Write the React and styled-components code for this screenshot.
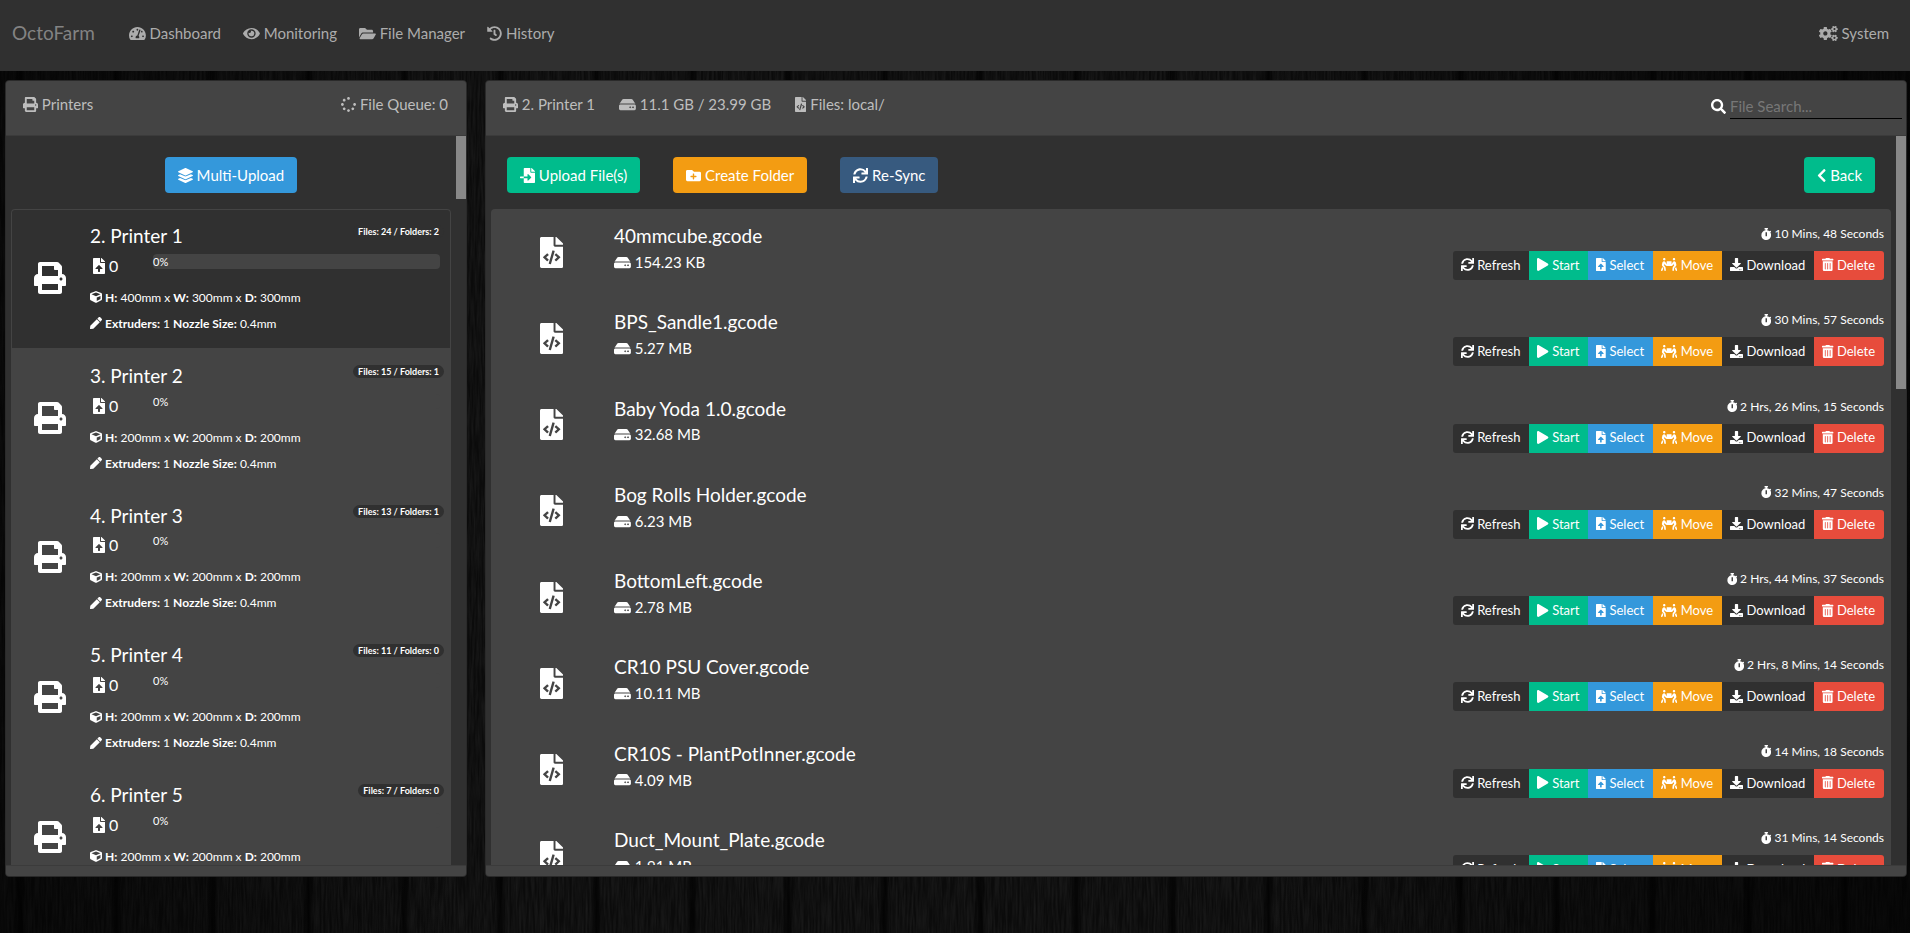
import React from "react";
import styled, { createGlobalStyle } from "styled-components";
import {
  FaTachometerAlt,
  FaEye,
  FaFolderOpen,
  FaHistory,
  FaCogs,
  FaPrint,
  FaSpinner,
  FaLayerGroup,
  FaFileUpload,
  FaCube,
  FaPen,
  FaHdd,
  FaFileCode,
  FaSearch,
  FaFileImport,
  FaFolderPlus,
  FaSync,
  FaChevronLeft,
  FaStopwatch,
  FaPlay,
  FaPeopleCarry,
  FaDownload,
  FaTrashAlt,
} from "react-icons/fa";

const color = {
  dark: "#303030",
  panel: "#444444",
  green: "#00bc8c",
  blue: "#3498db",
  orange: "#f39c12",
  navy: "#375a7f",
  red: "#e74c3c",
};

const grain = `url("data:image/svg+xml,${encodeURIComponent(
  `<svg xmlns="http://www.w3.org/2000/svg" width="960" height="960"><filter id="g" x="0" y="0" width="100%" height="100%"><feTurbulence type="fractalNoise" baseFrequency="0.5 0.03" numOctaves="3" seed="4"/><feColorMatrix values="0 0 0 0 1  0 0 0 0 1  0 0 0 0 1  0.1 0 0 0 -0.03"/></filter><rect width="960" height="960" filter="url(#g)"/></svg>`
)}")`;

const GlobalStyle = createGlobalStyle`
  *, *::before, *::after { box-sizing: border-box; }
  body {
    margin: 0;
    min-height: 100vh;
    overflow: hidden;
    color: #fff;
    font: 400 15px/1.5 Lato, "Liberation Sans", sans-serif;
    background-color: #0b0b0b;
    background-image:
      linear-gradient(90deg, rgba(0,0,0,.5), transparent 25%, transparent 65%, rgba(0,0,0,.6)),
      repeating-linear-gradient(90deg, transparent 0 14px, rgba(0,0,0,.6) 19px, rgba(0,0,0,.7) 21px, transparent 26px 96px),
      ${grain};
  }
  ul { list-style: none; margin: 0; padding: 0; }
  a { color: inherit; text-decoration: none; }

  /* Icons keep the proportions of their own glyph boxes. */
  svg { height: 1em; vertical-align: -0.125em; }
  svg[viewBox="0 0 320 512"] { width: 0.625em; }
  svg[viewBox="0 0 384 512"] { width: 0.75em; }
  svg[viewBox="0 0 448 512"] { width: 0.875em; }
  svg[viewBox="0 0 576 512"] { width: 1.125em; }
  svg[viewBox="0 0 640 512"] { width: 1.25em; }
`;

const Navbar = styled.nav`
  display: flex;
  align-items: center;
  height: 71px;
  padding: 0 21px 5px 12px;
  background: ${color.dark};
  color: #acacac;
`;

const Brand = styled.a`
  margin-right: 34px;
  color: #838383;
  font-size: 19px;
`;

const NavLinks = styled.ul`
  display: flex;
  flex: 1;
  gap: 22px;
`;

const Main = styled.main`
  display: grid;
  grid-template-columns: 462fr 1422fr;
  gap: 18px;
  padding: 9px 3px 0 5px;
`;

const Card = styled.section`
  min-width: 0;
  overflow: hidden;
  border: 1px solid #2a2a2a;
  border-radius: 4px;
  background: ${color.dark};
`;

const CardHeader = styled.header`
  display: flex;
  gap: 24px;
  height: 55px;
  padding: 12px 4px 0 17px;
  border-bottom: 1px solid #3b3b3b;
  background: ${color.panel};
  color: #bdbdbd;
`;

const HeaderEnd = styled.div`
  margin-left: auto;
  padding-right: 14px;
`;

const Search = styled.label`
  display: flex;
  align-items: center;
  gap: 4px;
  height: 26px;
  margin-left: auto;
  color: #fff;
`;

const SearchInput = styled.input`
  width: 172px;
  height: 26px;
  padding: 0;
  border: 0;
  border-bottom: 1px solid #000;
  outline: 0;
  background: transparent;
  color: #fff;
  font: inherit;
  &::placeholder { color: #777; opacity: 1; }
`;

const CardBody = styled.div`
  display: flex;
  height: calc(100vh - 204px);
`;

const Scroller = styled.div`
  flex: 1;
  min-width: 0;
  padding: 0 5px;
  overflow: auto;
  scrollbar-width: none;
`;

const Track = styled.div`
  width: 10px;
  background: ${color.dark};
`;

const Thumb = styled.div`
  height: ${(p) => p.$size};
  background: #888;
`;

const CardFooter = styled.footer`
  height: 11px;
  border-top: 1px solid #3b3b3b;
  background: ${color.panel};
`;

const Toolbar = styled.div`
  display: flex;
  justify-content: ${(p) => (p.$center ? "center" : "flex-start")};
  gap: 33px;
  padding: 21px 16px 16px;
`;

const Button = styled.button`
  height: 36px;
  margin-left: ${(p) => (p.$end ? "auto" : "0")};
  padding: 0 13px;
  border: 0;
  border-radius: 4px;
  background: ${(p) => p.$bg};
  color: #fff;
  font: inherit;
  white-space: nowrap;
`;

const List = styled.ul`
  overflow: hidden;
  border-radius: 4px;
  background: ${color.panel};
`;

const PrinterRow = styled.li`
  display: flex;
  align-items: center;
  padding: 16px 7px 15px 0;
  background: ${(p) => (p.$active ? color.dark : color.panel)};
  border-radius: ${(p) => (p.$active ? "4px 4px 0 0" : "0")};
  box-shadow: ${(p) => (p.$active ? `inset 0 0 0 1px ${color.panel}` : "none")};
`;

const PrinterIcon = styled.div`
  width: 79px;
  padding: 0 2px 3px 0;
  text-align: center;
  font-size: 32px;
  line-height: 1;
`;

const PrinterInfo = styled.div`
  flex: 1;
`;

const Title = styled.h2`
  margin: 0;
  font-size: 19px;
  font-weight: 400;
  line-height: 1.2;
`;

const TitleLine = styled.div`
  display: flex;
  justify-content: space-between;
  align-items: flex-start;
`;

const Badge = styled.span`
  padding: 0 5px;
  border-radius: 10px;
  background: ${color.dark};
  font-size: 9px;
  font-weight: 700;
  line-height: 13px;
`;

const QueueLine = styled.div`
  display: flex;
  margin: 6px 4px 10px 0;
`;

const QueueCount = styled.span`
  width: 63px;
  padding-left: 3px;
  font-size: 16px;
`;

const Progress = styled.div`
  flex: 1;
  height: 15px;
  border-radius: 4px;
  background: ${color.panel};
  font-size: 11px;
  line-height: 15px;
`;

const Spec = styled.div`
  margin-top: ${(p) => (p.$next ? "6px" : "0")};
  font-size: 12px;
  line-height: 20px;
`;

const FileRow = styled.li`
  display: flex;
  align-items: flex-start;
  padding: 15px 7px 13px 0;
`;

const FileIcon = styled.div`
  align-self: center;
  width: 123px;
  padding: 0 2px 2px 0;
  text-align: center;
  font-size: 31px;
  line-height: 1;
`;

const FileInfo = styled.div`
  flex: 1;
  min-width: 0;
  padding: 1px 0 9px;
`;

const FileSize = styled.div`
  margin-top: 3px;
`;

const FileActions = styled.div`
  display: flex;
  flex-direction: column;
  align-items: flex-end;
  gap: 7px;
`;

const PrintTime = styled.span`
  font-size: 12px;
  line-height: 20px;
`;

const ButtonGroup = styled.div`
  display: flex;
  overflow: hidden;
  border-radius: 3px;
`;

const SmallButton = styled.button`
  height: 29px;
  padding: 0 9px 0 8px;
  border: 0;
  background: ${(p) => p.$bg};
  color: #fff;
  font: inherit;
  font-size: 13px;
  white-space: nowrap;
`;

const navItems = [
  [FaTachometerAlt, "Dashboard"],
  [FaEye, "Monitoring"],
  [FaFolderOpen, "File Manager"],
  [FaHistory, "History"],
];

const printers = [
  { name: "2. Printer 1", files: 24, folders: 2, h: 400, w: 300, d: 300, active: true },
  { name: "3. Printer 2", files: 15, folders: 1, h: 200, w: 200, d: 200 },
  { name: "4. Printer 3", files: 13, folders: 1, h: 200, w: 200, d: 200 },
  { name: "5. Printer 4", files: 11, folders: 0, h: 200, w: 200, d: 200 },
  { name: "6. Printer 5", files: 7, folders: 0, h: 200, w: 200, d: 200 },
];

const files = [
  ["40mmcube.gcode", "154.23 KB", "10 Mins, 48 Seconds"],
  ["BPS_Sandle1.gcode", "5.27 MB", "30 Mins, 57 Seconds"],
  ["Baby Yoda 1.0.gcode", "32.68 MB", "2 Hrs, 26 Mins, 15 Seconds"],
  ["Bog Rolls Holder.gcode", "6.23 MB", "32 Mins, 47 Seconds"],
  ["BottomLeft.gcode", "2.78 MB", "2 Hrs, 44 Mins, 37 Seconds"],
  ["CR10 PSU Cover.gcode", "10.11 MB", "2 Hrs, 8 Mins, 14 Seconds"],
  ["CR10S - PlantPotInner.gcode", "4.09 MB", "14 Mins, 18 Seconds"],
  ["Duct_Mount_Plate.gcode", "1.91 MB", "31 Mins, 14 Seconds"],
];

const actions = [
  [FaSync, "Refresh", color.dark],
  [FaPlay, "Start", color.green],
  [FaFileUpload, "Select", color.blue],
  [FaPeopleCarry, "Move", color.orange],
  [FaDownload, "Download", color.dark],
  [FaTrashAlt, "Delete", color.red],
];

function Printer({ printer }) {
  return (
    <PrinterRow $active={printer.active}>
      <PrinterIcon><FaPrint /></PrinterIcon>
      <PrinterInfo>
        <TitleLine>
          <Title>{printer.name}</Title>
          <Badge>Files: {printer.files} / Folders: {printer.folders}</Badge>
        </TitleLine>
        <QueueLine>
          <QueueCount><FaFileUpload /> 0</QueueCount>
          <Progress>0%</Progress>
        </QueueLine>
        <Spec>
          <FaCube /> <b>H:</b> {printer.h}mm x <b>W:</b> {printer.w}mm x <b>D:</b> {printer.d}mm
        </Spec>
        <Spec $next>
          <FaPen /> <b>Extruders:</b> 1 <b>Nozzle Size:</b> 0.4mm
        </Spec>
      </PrinterInfo>
    </PrinterRow>
  );
}

function File({ name, size, time }) {
  return (
    <FileRow>
      <FileIcon><FaFileCode /></FileIcon>
      <FileInfo>
        <Title>{name}</Title>
        <FileSize><FaHdd /> {size}</FileSize>
      </FileInfo>
      <FileActions>
        <PrintTime><FaStopwatch /> {time}</PrintTime>
        <ButtonGroup>
          {actions.map(([Icon, label, bg]) => (
            <SmallButton type="button" key={label} $bg={bg}><Icon /> {label}</SmallButton>
          ))}
        </ButtonGroup>
      </FileActions>
    </FileRow>
  );
}

export default function App() {
  return (
    <>
      <GlobalStyle />
      <Navbar>
        <Brand href="#">OctoFarm</Brand>
        <NavLinks>
          {navItems.map(([Icon, label]) => (
            <li key={label}><a href="#"><Icon /> {label}</a></li>
          ))}
        </NavLinks>
        <a href="#"><FaCogs /> System</a>
      </Navbar>
      <Main>
        <Card>
          <CardHeader>
            <span><FaPrint /> Printers</span>
            <HeaderEnd><FaSpinner /> File Queue: 0</HeaderEnd>
          </CardHeader>
          <CardBody>
            <Scroller>
              <Toolbar $center>
                <Button type="button" $bg={color.blue}><FaLayerGroup /> Multi-Upload</Button>
              </Toolbar>
              <List>
                {printers.map((p) => <Printer key={p.name} printer={p} />)}
              </List>
            </Scroller>
            <Track><Thumb $size="8.6%" /></Track>
          </CardBody>
          <CardFooter />
        </Card>
        <Card>
          <CardHeader>
            <span><FaPrint /> 2. Printer 1</span>
            <span><FaHdd /> 11.1 GB / 23.99 GB</span>
            <span><FaFileCode /> Files: local/</span>
            <Search>
              <FaSearch />
              <SearchInput type="text" placeholder="File Search..." aria-label="File Search" />
            </Search>
          </CardHeader>
          <CardBody>
            <Scroller>
              <Toolbar>
                <Button type="button" $bg={color.green}><FaFileImport /> Upload File(s)</Button>
                <Button type="button" $bg={color.orange}><FaFolderPlus /> Create Folder</Button>
                <Button type="button" $bg={color.navy}><FaSync /> Re-Sync</Button>
                <Button type="button" $bg={color.green} $end><FaChevronLeft /> Back</Button>
              </Toolbar>
              <List>
                {files.map(([name, size, time]) => (
                  <File key={name} name={name} size={size} time={time} />
                ))}
              </List>
            </Scroller>
            <Track><Thumb $size="34.7%" /></Track>
          </CardBody>
          <CardFooter />
        </Card>
      </Main>
    </>
  );
}
